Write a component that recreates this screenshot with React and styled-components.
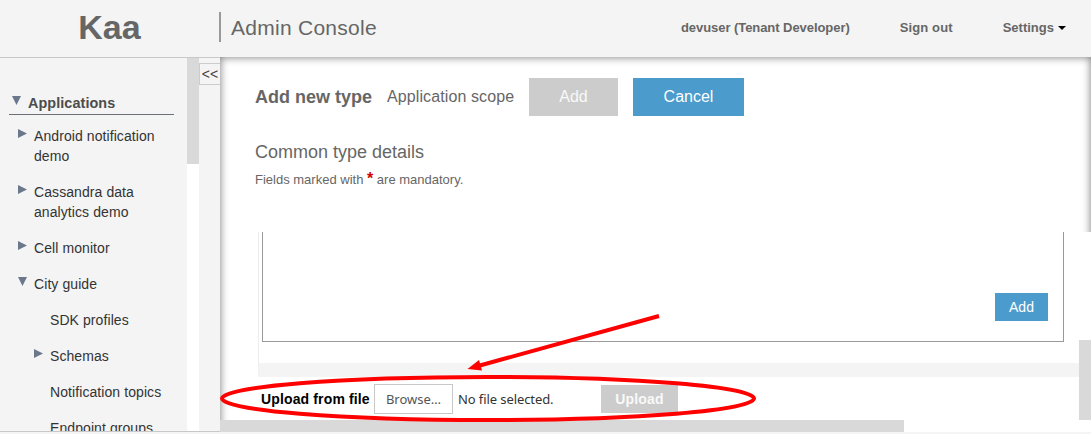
import React from 'react';
import styled, { createGlobalStyle } from 'styled-components';

const GlobalStyle = createGlobalStyle`
  * { box-sizing: border-box; }
  body {
    margin: 0;
    background: #f4f4f4;
    color: #666;
    font-family: "Liberation Sans", Arial, sans-serif;
    overflow: hidden;
  }
`;

const Page = styled.div`
  position: relative;
  display: flex;
  flex-direction: column;
  width: 1091px;
  height: 434px;
  overflow: hidden;
`;

const Header = styled.header`
  display: flex;
  align-items: center;
  height: 58px;
  flex: none;
  border-bottom: 1px solid #c8c8c8;
`;

const Brand = styled.div`
  width: 219px;
  text-align: center;
  font-size: 34px;
  font-weight: bold;
  line-height: 38px;
  margin-top: -3px;
`;

const Title = styled.div`
  height: 30px;
  margin-top: -3px;
  padding-left: 10px;
  border-left: 2px solid #999;
  font-size: 21px;
  line-height: 31px;
  letter-spacing: 0.27px;
  flex: 1;
`;

const Nav = styled.nav`
  display: flex;
  align-items: center;
  gap: 50px;
  padding-right: 25px;
  margin-top: -2px;
  font-size: 13px;
  font-weight: bold;
  line-height: 16px;
`;

const NavItem = styled.span`
  display: flex;
  align-items: center;
  letter-spacing: ${(p) => p.$track || 0}px;
`;

const Caret = styled.i`
  margin-left: 4px;
  border: 4px solid transparent;
  border-top-color: #000;
  border-bottom: 0;
`;

const Body = styled.div`
  display: flex;
  height: 374px;
  flex: none;
`;

const Side = styled.aside`
  display: flex;
  width: 220px;
  flex: none;
  border-bottom: 1px solid #c8c8c8;
`;

const Tree = styled.div`
  width: 187px;
  height: 373px;
  overflow: hidden;
  padding: 35px 13px 0 9px;
  font-size: 14px;
  line-height: 20px;
  letter-spacing: 0.08px;
  color: #333;
`;

const TreeHead = styled.div`
  display: flex;
  height: 22px;
  font-size: 14.4px;
  font-weight: bold;
  color: #4c4c4c;
  border-bottom: 1px solid #6b7079;
  margin-bottom: 3px;
`;

const TreeItem = styled.div`
  display: flex;
  padding: 8px 0;
  padding-left: ${(p) => p.$indent}px;
`;

const Toggle = styled.svg`
  width: 9px;
  height: 9px;
  flex: none;
  margin: 3px 7px 0 ${(p) => p.$left}px;
`;

const TreeScroll = styled.div`
  width: 12px;
  background: #fff;
`;

const TreeThumb = styled.div`
  height: 106px;
  background: #d9d9d9;
`;

const Gutter = styled.div`
  flex: 1;
  padding-top: 5px;
`;

const Collapse = styled.div`
  height: 22px;
  border: 1px solid #ccc;
  border-right: 0;
  font-size: 14px;
  line-height: 20px;
  text-align: center;
  color: #444;
`;

const Main = styled.main`
  display: flex;
  flex-direction: column;
  width: 871px;
  margin-top: -1px;
  height: 375px;
  background: #fff;
  box-shadow: inset 0 0 8px 0 rgba(0, 0, 0, 0.55);
`;

const Top = styled.section`
  height: 175px;
  flex: none;
  padding: 21px 0 0 35px;
`;

const TitleRow = styled.div`
  display: flex;
  align-items: center;
  gap: 15px;
  height: 38px;
  font-size: 16px;
`;

const Heading = styled.h1`
  margin: 0;
  font-size: 18px;
`;

const Scope = styled.span`
  width: 127px;
  letter-spacing: 0.1px;
  white-space: nowrap;
`;

const Button = styled.div`
  display: flex;
  align-items: center;
  justify-content: center;
  width: ${(p) => p.$w}px;
  height: ${(p) => p.$h}px;
  flex: none;
  background: ${(p) => (p.$disabled ? '#ccc' : '#4b9bcd')};
  color: ${(p) => (p.$disabled ? '#f9f9f9' : '#fff')};
  font-size: ${(p) => p.$size}px;
  font-weight: ${(p) => (p.$bold ? 'bold' : 'normal')};
  letter-spacing: ${(p) => (p.$bold ? 0.2 : 0)}px;
`;

const SubHeading = styled.h2`
  margin: 26px 0 0;
  font-size: 18px;
  font-weight: normal;
  line-height: 20px;
`;

const Note = styled.p`
  margin: 8px 0 0;
  font-size: 13px;
  line-height: 20px;
`;

const Star = styled.b`
  color: #d00000;
  font-size: 16px;
  line-height: 1px;
`;

const Scroller = styled.section`
  display: grid;
  grid-template: 188px 12px / 859px 12px;
`;

const Content = styled.div`
  padding-left: 38px;
  background: linear-gradient(to right, transparent 10px, #fff 10px);
`;

const Panel = styled.div`
  height: 145px;
  padding-left: 3px;
  border-left: 1px solid #ececec;
  border-bottom: 14px solid #f4f4f4;
`;

const FieldBox = styled.div`
  display: flex;
  justify-content: flex-end;
  align-items: flex-end;
  width: 802px;
  height: 110px;
  padding: 0 15px 20px 0;
  border: 1px solid #999;
  border-top: 0;
`;

const UploadRow = styled.div`
  display: flex;
  align-items: center;
  height: 44px;
  padding-left: 3px;
  color: #333;
`;

const Label = styled.b`
  width: 113px;
  font-size: 14px;
  letter-spacing: 0.14px;
  color: #000;
`;

const Browse = styled.div`
  width: 79px;
  height: 30px;
  border: 1px solid #c8c8c8;
  background: #fff;
  color: #555;
  font: 13px/29px "Noto Sans", sans-serif;
  text-align: center;
`;

const FileName = styled.div`
  width: 148px;
  padding-left: 5px;
  font: 13px/30px "Noto Sans", sans-serif;
  letter-spacing: -0.09px;
`;

const VBar = styled.div`
  background: #fff;
  padding-top: 108px;
`;

const VThumb = styled.div`
  height: 80px;
  background: #d9d9d9;
`;

const HBar = styled.div`
  grid-column: 1 / 3;
  background: #fff;
`;

const HThumb = styled.div`
  width: 684px;
  height: 12px;
  background: #d9d9d9;
`;

const Markup = styled.svg`
  position: absolute;
  left: 0;
  top: 0;
  pointer-events: none;
`;

const Arrow = ({ open, left = 2 }) => (
  <Toggle viewBox="0 0 9 9" $left={left}>
    <path d={open ? 'M0 0H9L4.5 9Z' : 'M0 0V9L9 4.5Z'} fill="#6b788c" />
  </Toggle>
);

const items = [
  { label: 'Android notification demo', indent: 7, arrow: 'closed' },
  { label: 'Cassandra data analytics demo', indent: 7, arrow: 'closed' },
  { label: 'Cell monitor', indent: 7, arrow: 'closed' },
  { label: 'City guide', indent: 7, arrow: 'open' },
  { label: 'SDK profiles', indent: 41 },
  { label: 'Schemas', indent: 23, arrow: 'closed' },
  { label: 'Notification topics', indent: 41 },
  { label: 'Endpoint groups', indent: 41 },
];

export default function App() {
  return (
    <Page>
      <GlobalStyle />
      <Header>
        <Brand>Kaa</Brand>
        <Title>Admin Console</Title>
        <Nav>
          <NavItem $track={-0.06}>devuser (Tenant Developer)</NavItem>
          <NavItem $track={0.13}>Sign out</NavItem>
          <NavItem>Settings<Caret /></NavItem>
        </Nav>
      </Header>
      <Body>
        <Side>
          <Tree>
            <TreeHead><Arrow open left={3} />Applications</TreeHead>
            {items.map((it) => (
              <TreeItem key={it.label} $indent={it.indent}>
                {it.arrow && <Arrow open={it.arrow === 'open'} />}
                <span>{it.label}</span>
              </TreeItem>
            ))}
          </Tree>
          <TreeScroll><TreeThumb /></TreeScroll>
          <Gutter><Collapse>&lt;&lt;</Collapse></Gutter>
        </Side>
        <Main>
          <Top>
            <TitleRow>
              <Heading>Add new type</Heading>
              <Scope>Application scope</Scope>
              <Button $w={89} $h={38} $size={16} $disabled>Add</Button>
              <Button $w={111} $h={38} $size={16}>Cancel</Button>
            </TitleRow>
            <SubHeading>Common type details</SubHeading>
            <Note>Fields marked with <Star>*</Star> are mandatory.</Note>
          </Top>
          <Scroller>
            <Content>
              <Panel>
                <FieldBox><Button $w={53} $h={28} $size={14}>Add</Button></FieldBox>
              </Panel>
              <UploadRow>
                <Label>Upload from file</Label>
                <Browse>Browse…</Browse>
                <FileName>No file selected.</FileName>
                <Button $w={77} $h={28} $size={14} $bold $disabled>Upload</Button>
              </UploadRow>
            </Content>
            <VBar><VThumb /></VBar>
            <HBar><HThumb /></HBar>
          </Scroller>
        </Main>
      </Body>
      <Markup width="1091" height="434">
        <ellipse cx="488" cy="398.5" rx="266" ry="21.5" fill="none" stroke="#f00" strokeWidth="4" />
        <path d="M659 316L478 366" stroke="#f00" strokeWidth="4" />
        <path d="M467.500 369L479 360L482 370.500Z" fill="#f00" />
      </Markup>
    </Page>
  );
}
